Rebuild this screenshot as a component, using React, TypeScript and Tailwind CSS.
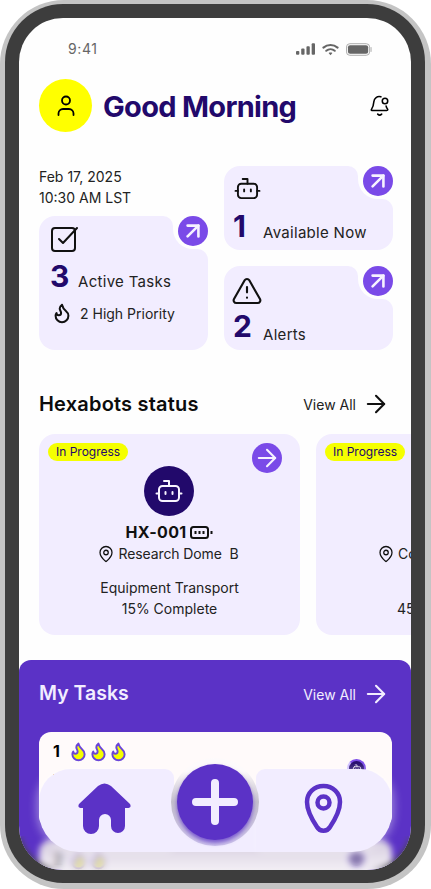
import { ArrowRight, ArrowUpRight, Flame, MapPin, TriangleAlert } from 'lucide-react'

function BotIcon({ className }: { className?: string }) {
  return (
    <svg viewBox="0 0 28 24" fill="none" stroke="currentColor" strokeWidth="2" strokeLinecap="round" strokeLinejoin="round" className={className}>
      <rect x="4" y="7" width="20" height="15" rx="3.5" />
      <path d="M14 7V2H9" />
      <path d="M1.5 14.5H4M24 14.5h2.5" />
      <path d="M10.5 13v2M17.5 13v2" />
    </svg>
  )
}

function BellIcon() {
  return (
    <svg viewBox="0 0 22 24" fill="none" stroke="black" strokeWidth="1.7" strokeLinecap="round" strokeLinejoin="round" className="w-[20px] h-[23px]">
      <path d="M12 2.500c-4-1.200-7.500 1.500-7.800 5.500-.2 3-.6 5.500-2.700 8.500-.3.500 0 1 .5 1h16.500c1.300 0 1.200-1 .7-1.800-.8-1.100-1.200-2-1.500-3.200" />
      <circle cx="16.500" cy="7" r="3" />
      <path d="M8.500 21.500c1.300 1.300 3 1.300 4.300 0" />
    </svg>
  )
}

function UserIcon() {
  return (
    <svg viewBox="0 0 18 22" fill="none" stroke="black" strokeWidth="1.8" strokeLinecap="round" className="w-[18px] h-[22px]">
      <circle cx="9" cy="5.500" r="4" />
      <path d="M1.500 20v-1.500c0-2.500 2-4.500 4.500-4.500h6c2.500 0 4.500 2 4.500 4.500V20" />
    </svg>
  )
}

function CheckIcon() {
  return (
    <svg viewBox="0 0 27 26" fill="none" stroke="#111" strokeWidth="2" strokeLinecap="round" strokeLinejoin="round" className="w-[27px] h-[26px]">
      <rect x="1" y="2" width="23" height="23" rx="3" />
      <path d="M8 13l4 4L26 2" />
    </svg>
  )
}

function StatusIcons() {
  return (
    <div className="flex items-center gap-[7px]">
      <svg viewBox="0 0 20 12" className="w-[19px] h-[12px]" fill="#666">
        <rect x="0" y="8" width="3.500" height="4" rx="1" />
        <rect x="5.500" y="5.500" width="3.500" height="6.500" rx="1" />
        <rect x="11" y="3" width="3.500" height="9" rx="1" />
        <rect x="16.500" y="0" width="3.500" height="12" rx="1" />
      </svg>
      <svg viewBox="0 0 18 13" className="w-[17px] h-[13px]" fill="none" stroke="#666" strokeWidth="2.200" strokeLinecap="round">
        <path d="M1.500 4.500c4.300-3.700 10.700-3.700 15 0" />
        <path d="M4.500 7.800c2.600-2.200 6.400-2.200 9 0" />
        <path d="M9 12.500l-2-2.300c1-.7 3-.7 4 0z" fill="#666" stroke="none" />
      </svg>
      <svg viewBox="0 0 28 13" className="w-[27px] h-[13px]" fill="none">
        <rect x="0.500" y="0.500" width="24" height="12" rx="3.500" stroke="#aaa" />
        <rect x="2" y="2" width="21" height="9" rx="2.200" fill="#666" />
        <path d="M26 4.500v4" stroke="#aaa" strokeLinecap="round" />
      </svg>
    </div>
  )
}

// corner cut-out with the arrow button, sits over the top right of a card
function CardNotch() {
  return (
    <>
      <div className="absolute right-0 top-0 w-[35px] h-[33px] bg-[#fefefe] rounded-bl-[20px]" />
      <div className="absolute right-[35px] top-0 w-[10px] h-[10px] bg-[#fefefe]">
        <div className="w-full h-full bg-[#f2edff] rounded-tr-[10px]" />
      </div>
      <div className="absolute right-0 top-[33px] w-[11px] h-[11px] bg-[#fefefe]">
        <div className="w-full h-full bg-[#f2edff] rounded-tr-[11px]" />
      </div>
      <div className="absolute right-0 top-0 w-[30px] h-[30px] rounded-full bg-[#7a4ae8] flex items-center justify-center">
        <ArrowUpRight size={26} color="#f6f2ff" strokeWidth={2.4} />
      </div>
    </>
  )
}

function HexabotCard({ id, place, task, progress }: { id?: string; place: string; task: string; progress: string }) {
  return (
    <div className="relative shrink-0 w-[261px] h-[201px] rounded-2xl bg-[#f2edff] flex flex-col items-center pt-[32px]">
      <div className="absolute left-[9px] top-[9px] h-[18px] px-[8px] rounded-full bg-[#f5ff00] text-[12px] leading-[18px] text-[#22096b]">
        In Progress
      </div>
      <div className="absolute right-[18px] top-[9px] w-[30px] h-[30px] rounded-full bg-[#7a4ae8] flex items-center justify-center">
        <ArrowRight size={28} color="#f6f2ff" strokeWidth={1.8} />
      </div>
      <div className="w-[50px] h-[50px] mr-[1px] rounded-full bg-[#22096b] flex items-center justify-center">
        <BotIcon className="w-[28px] h-[24px] text-[#f8f4ff]" />
      </div>
      <div className="mt-[6px] h-[20px] flex items-center gap-[4px] text-[16px] font-bold tracking-[0.3px] text-[#111]">
        {id}
        {id && (
          <svg viewBox="0 0 23 13" className="w-[23px] h-[13px]" fill="none" stroke="#111" strokeWidth="2">
            <rect x="1" y="1" width="17" height="11" rx="2.500" />
            <path d="M5.500 5v3M9.500 5v3M13.500 5v3" />
            <path d="M21.500 5v3" />
          </svg>
        )}
      </div>
      <div className="mt-[1px] mr-[3px] h-[21px] flex items-center gap-[3px] text-[14px] tracking-[-0.1px] text-[#222]">
        <MapPin size={18} color="#111" strokeWidth={1.7} />
        <span className="whitespace-pre">{place}</span>
      </div>
      <div className="mt-[13px] text-[14px] leading-[21px] text-[#222] text-center">
        {task}
        <br />
        {progress}
      </div>
    </div>
  )
}

function TaskCard({ num, title, flames, faded }: { num: string; title: string; flames: number; faded?: boolean }) {
  return (
    <div className={faded ? 'relative h-[96px] shrink-0 rounded-xl bg-gradient-to-b from-[#d4cbde] to-[#f2eef4] to-30% pl-[14px] pt-[8px]' : 'relative h-[96px] shrink-0 rounded-xl bg-[#fffafa] pl-[14px] pt-[8px]'}>
      <div className={faded ? 'flex items-center h-[22px] opacity-40' : 'flex items-center h-[22px]'}>
        <span className="w-[15px] text-[16px] font-bold text-black">{num}</span>
        {Array.from({ length: flames }).map((_, i) => (
          <span key={i} className="w-[20px]">
            <Flame size={21} fill="#f5ff00" color="#6a45d8" strokeWidth={2.2} />
          </span>
        ))}
      </div>
      <div className="mt-[6px] text-[16px] font-semibold text-black">{title}</div>
      <div className={faded ? 'absolute right-[26px] top-[9px] w-[19px] h-[19px] rounded-full bg-[#22096b] border-[2px] border-[#cdbcff] opacity-50' : 'absolute right-[26px] top-[27px] w-[19px] h-[19px] rounded-full bg-[#22096b] border-[2px] border-[#cdbcff] border-t-[#7a4ae8] border-r-[#7a4ae8] flex items-center justify-center'}>
        {!faded && <BotIcon className="w-[10px] h-[9px] text-white" />}
      </div>
    </div>
  )
}

function BottomNav() {
  return (
    <div className="absolute left-[20px] right-[19px] bottom-[18px] h-[83px] flex">
      <div className="w-[135px] h-full pl-[39px] pt-[14px] bg-[#f2edff] rounded-tl-[32px] rounded-tr-[9px] rounded-bl-[40px] shadow-[-2px_0_10px_rgba(255,255,255,0.4)]">
        <svg viewBox="0 0 53 51" className="w-[53px] h-[51px]" fill="#5b32c6">
          <path d="M20 3Q26.500-2 33 3L52 21Q54 25 49 25H47V43A7 7 0 0 1 33 43V37A6 6 0 0 0 21 37V43A8 8 0 0 1 5 43V25H4Q-1 25 1 21Z" />
        </svg>
      </div>
      <div className="w-[82px] h-[49px] mt-[34px] bg-[#f2edff]" />
      <div className="flex-1 h-full pl-[48px] pt-[14px] bg-[#f2edff] rounded-tl-[9px] rounded-tr-[32px] rounded-br-[40px] shadow-[2px_0_10px_rgba(255,255,255,0.4)]">
        <svg viewBox="0 0 39 51" className="w-[39px] h-[51px]" fill="none" stroke="#5b32c6" strokeWidth="4.500">
          <path d="M19.500 3C10 3 3 10 3 19C3 27 9 38 13 44C16 49 23 49 26 44C30 38 36 27 36 19C36 10 29 3 19.500 3Z" />
          <circle cx="19.500" cy="19.500" r="6" />
        </svg>
      </div>
      <div className="absolute left-[132px] top-[-11px] w-[88px] h-[88px] rounded-full bg-gradient-to-b from-[#fdfafb] from-15% via-[#c4bfcc] via-50% to-[#cfc6ec] flex items-center justify-center">
        <div className="w-[76px] h-[76px] rounded-full bg-[#5b32c6] shadow-[0_3px_4px_rgba(91,50,198,0.75)] flex items-center justify-center">
          <svg viewBox="0 0 46 46" className="w-[46px] h-[46px]" stroke="#f2edff" strokeWidth="8" strokeLinecap="round">
            <path d="M23 4v38M4 23h38" />
          </svg>
        </div>
      </div>
    </div>
  )
}

export default function App() {
  return (
    <div className="w-[431px] h-[889px] rounded-[64px] bg-[#c4c4c4] pt-[4px] pl-[5px] pr-[6px] pb-[6px] font-['Inter',sans-serif]">
      <div className="w-full h-full rounded-[58px] bg-[#3d3d3d] pt-[14px] pb-[13px] pl-[14px] pr-[14px]">
        <div className="relative w-[392px] h-[852px] rounded-[44px] bg-[#fefefe] overflow-hidden">
          {/* Status bar */}
          <div className="flex items-center justify-between h-[14px] mt-[24px] pl-[49px] pr-[38px]">
            <span className="text-[14px] leading-[14px] tracking-[0.6px] text-[#666]">9:41</span>
            <StatusIcons />
          </div>

          {/* Header */}
          <div className="flex items-center mt-[23px] pl-[20px] pr-[21px]">
            <div className="w-[53px] h-[53px] rounded-full bg-[#ffff00] flex items-center justify-center">
              <UserIcon />
            </div>
            <h1 className="ml-[11px] pt-[2px] text-[29px] leading-[36px] font-bold tracking-[-0.7px] text-[#22096b]">Good Morning</h1>
            <div className="ml-auto">
              <BellIcon />
            </div>
          </div>

          {/* Summary cards */}
          <div className="grid grid-cols-[169px_169px] gap-x-[16px] mt-[34px] pl-[20px]">
            <div>
              <p className="text-[14px] leading-[21px] text-[#222] mb-[8px]">
                Feb 17, 2025
                <br />
                10:30 AM LST
              </p>
              <div className="relative h-[134px] rounded-2xl bg-[#f2edff] pl-[12px] pt-[10px]">
                <CardNotch />
                <CheckIcon />
                <div className="flex items-baseline mt-[6px]">
                  <span className="text-[30px] leading-[36px] font-bold text-[#22096b] w-[28px] -ml-[1px]">3</span>
                  <span className="text-[15px] tracking-[0.3px] text-[#222]">Active Tasks</span>
                </div>
                <div className="flex items-center mt-[8px]">
                  <Flame size={22} color="#111" strokeWidth={2.2} />
                  <span className="ml-[7px] text-[14px] text-[#222]">2 High Priority</span>
                </div>
              </div>
            </div>
            <div className="flex flex-col gap-y-[16px]">
              <div className="relative h-[84px] rounded-2xl bg-[#f2edff] pl-[10px] pt-[11px]">
                <CardNotch />
                <BotIcon className="w-[27px] h-[23px] text-[#111]" />
                <div className="flex items-baseline mt-[8px]">
                  <span className="text-[30px] leading-[36px] font-bold text-[#22096b] w-[30px] -ml-[1px]">1</span>
                  <span className="text-[15px] tracking-[0.3px] text-[#222] translate-y-[1px]">Available Now</span>
                </div>
              </div>
              <div className="relative h-[84px] rounded-2xl bg-[#f2edff] pl-[10px] pt-[9px]">
                <CardNotch />
                <TriangleAlert size={32} color="#111" strokeWidth={1.6} className="-ml-[3px]" />
                <div className="flex items-baseline mt-[1px]">
                  <span className="text-[30px] leading-[36px] font-bold text-[#22096b] w-[30px] -ml-[1px]">2</span>
                  <span className="text-[15px] tracking-[0.3px] text-[#222] translate-y-[3px]">Alerts</span>
                </div>
              </div>
            </div>
          </div>

          {/* Hexabots status */}
          <div className="flex items-center justify-between mt-[40px] pl-[20px] pr-[21px] h-[28px]">
            <h2 className="text-[20px] font-semibold tracking-[0.2px] text-[#0c0c0c]">Hexabots status</h2>
            <div className="flex items-center gap-[6px] text-[14px] text-[#222]">
              View All
              <ArrowRight size={28} color="#111" strokeWidth={1.8} />
            </div>
          </div>
          <div className="flex gap-x-[16px] mt-[16px] pl-[20px] overflow-hidden">
            <HexabotCard id="HX-001" place="Research Dome  B" task="Equipment Transport" progress="15% Complete" />
            <HexabotCard place="Command Center" task="Sampling" progress="45% Complete" />
          </div>

          {/* My Tasks */}
          <div className="mt-[25px] h-[210px] rounded-t-xl bg-[#5b32c6] pl-[20px] pr-[19px] pt-[20px]">
            <div className="flex items-center justify-between h-[28px] pr-[2px]">
              <h2 className="text-[19.5px] font-semibold text-[#f2edff]">My Tasks</h2>
              <div className="flex items-center gap-[6px] text-[14px] text-[#f2edff]">
                View All
                <ArrowRight size={28} color="#f2edff" strokeWidth={1.8} />
              </div>
            </div>
            <div className="flex flex-col gap-y-[12px] mt-[24px]">
              <TaskCard num="1" title="Tool Delivery" flames={3} />
              <TaskCard num="2" title="Soil Survey" flames={2} faded />
            </div>
          </div>

          {/* blur strip under the nav */}
          <div className="absolute left-0 right-0 bottom-0 h-[34px] backdrop-blur-[3px]" />
          <BottomNav />
        </div>
      </div>
    </div>
  )
}
